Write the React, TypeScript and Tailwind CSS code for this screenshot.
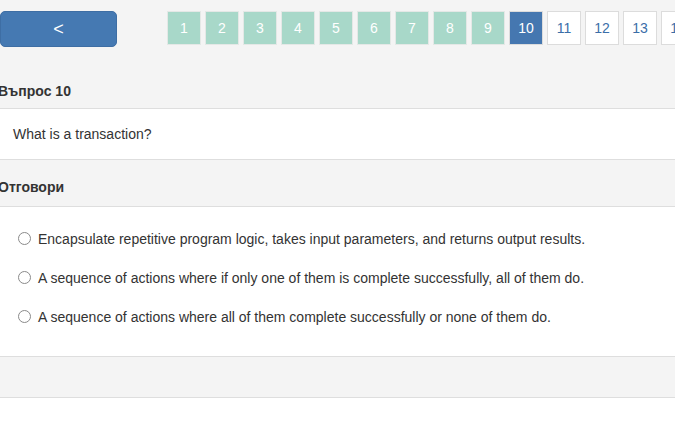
import React from 'react';

const pages = Array.from({ length: 14 }, (_, i) => i + 1);
const current = 10;

const answers = [
  'Encapsulate repetitive program logic, takes input parameters, and returns output results.',
  'A sequence of actions where if only one of them is complete successfully, all of them do.',
  'A sequence of actions where all of them complete successfully or none of them do.',
];

export default function App() {
  return (
    <div
      className="w-[675px] h-[436px] overflow-hidden bg-white text-[#333] text-[14px] leading-[18px]"
      style={{ fontFamily: '"Liberation Sans", Arial, sans-serif' }}
    >
      {/* Top bar + question header */}
      <div className="bg-[#f4f4f4] border-b border-[#dedede]">
        <div className="flex items-start pt-[11px]">
          <button className="w-[117px] h-[36px] shrink-0 rounded-[5px] bg-[#4579b2] border border-[#3e6ea4] text-white text-[18px] leading-none">
            &lt;
          </button>
          <div className="flex gap-[4px] ml-[50px] shrink-0">
            {pages.map((p) => (
              <div
                key={p}
                className={
                  p < current
                    ? 'w-[34px] h-[34px] shrink-0 flex items-center justify-center border border-[#e4e8e6] bg-[#a8d8c9] text-white'
                    : p === current
                    ? 'w-[34px] h-[34px] shrink-0 flex items-center justify-center border border-[#dcdcdc] bg-[#4577b0] text-white'
                    : 'w-[34px] h-[34px] shrink-0 flex items-center justify-center border border-[#dcdcdc] bg-white text-[#3b6ea8]'
                }
              >
                {p}
              </div>
            ))}
          </div>
        </div>
        <div className="mt-[35px] pb-[8px] ml-[-2px] font-bold">Въпрос 10</div>
      </div>

      {/* Question */}
      <div className="bg-white border-b border-[#dedede] px-[13px] py-[16px]">What is a transaction?</div>

      {/* Answers header */}
      <div className="bg-[#f4f4f4] border-b border-[#dedede] pt-[18px] pb-[10px] ml-[-2px] font-bold">Отговори</div>

      {/* Answers */}
      <div className="bg-white border-b border-[#dedede] pt-[12px] pb-[20px]">
        {answers.map((a) => (
          <label key={a} className="h-[39px] flex items-center pl-[18px]">
            <span className="w-[13px] h-[13px] shrink-0 rounded-full border border-[#8a8a8a] bg-white" />
            <span className="ml-[7px]">{a}</span>
          </label>
        ))}
      </div>

      {/* Footer strip */}
      <div className="bg-[#f4f4f4] border-b border-[#dedede] h-[41px]" />
    </div>
  );
}
